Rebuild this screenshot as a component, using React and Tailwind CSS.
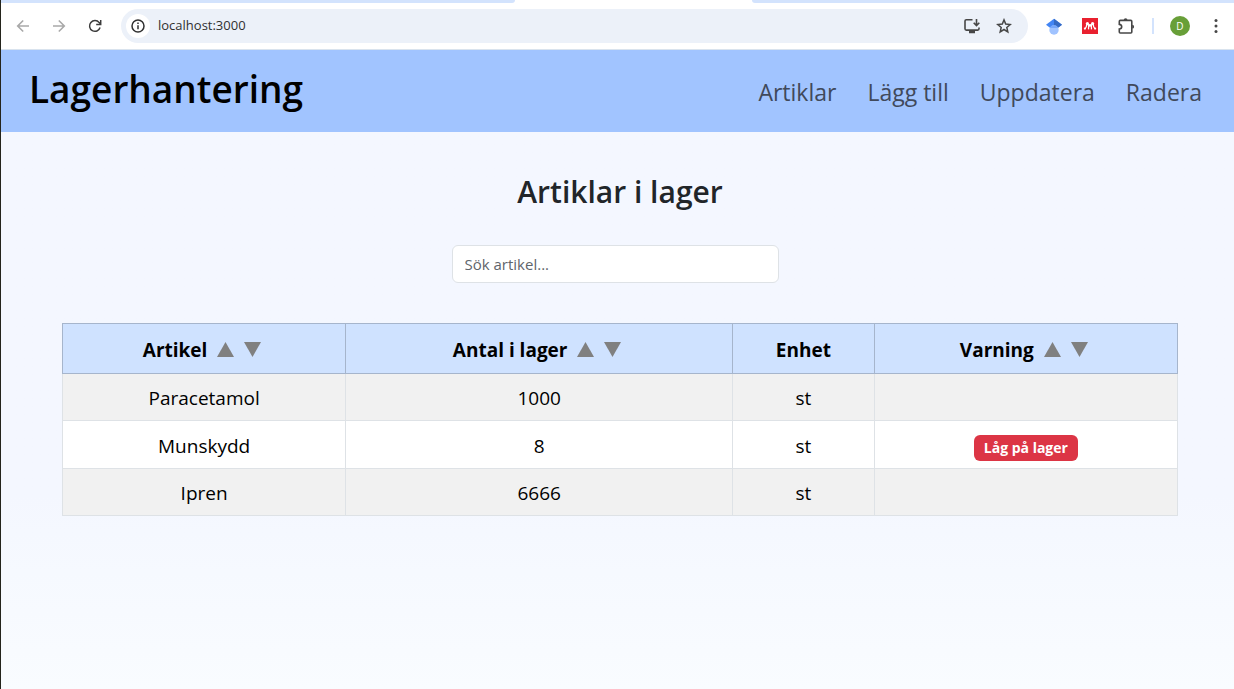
import React, { useState } from "react";

const links = ["Artiklar", "Lägg till", "Uppdatera", "Radera"];

const articles = [
  { name: "Paracetamol", amount: 1000, unit: "st" },
  { name: "Munskydd", amount: 8, unit: "st" },
  { name: "Ipren", amount: 6666, unit: "st" },
];

const LOW_STOCK = 10;

function ToolButton({ label, className = "", children }) {
  return (
    <button type="button" aria-label={label} className={`flex size-5 shrink-0 items-center justify-center ${className}`}>
      {children}
    </button>
  );
}

function BrowserBar() {
  return (
    <div className="border-b border-[#d9e3ee] bg-white">
      <div className="flex h-[3px] justify-between">
        <div className="h-full w-[514px] rounded-br-lg bg-[#d3e3fd]" />
        <div className="h-full w-[482px] rounded-bl-lg bg-[#d3e3fd]" />
      </div>
      <div className="flex h-[46px] items-center pr-2">
        <div className="flex w-[120px] shrink-0 items-center gap-4 pl-3">
          <ToolButton label="Tillbaka" className="text-[#a9a9a9]">
            <svg width="14" height="14" viewBox="0 0 14 14" fill="none" stroke="currentColor" strokeWidth="1.6">
              <path d="M13 7H2M7.2 1.5 1.7 7l5.5 5.5" />
            </svg>
          </ToolButton>
          <ToolButton label="Framåt" className="text-[#a9a9a9]">
            <svg width="14" height="14" viewBox="0 0 14 14" fill="none" stroke="currentColor" strokeWidth="1.6">
              <path d="M1 7h11M6.8 1.5 12.3 7l-5.5 5.5" />
            </svg>
          </ToolButton>
          <ToolButton label="Ladda om" className="text-[#3c3c3c]">
            <svg width="14" height="14" viewBox="0 0 14 14" fill="none" stroke="currentColor" strokeWidth="1.5">
              <path d="M12.1 8.6A5.4 5.4 0 1 1 11.2 3.6L12.5 5" />
              <path d="M12.7 1v4.5H8.2" />
            </svg>
          </ToolButton>
        </div>
        <div className="flex h-[34px] min-w-0 grow items-center rounded-full bg-[#ecf1f9] pl-[5px]">
          <button type="button" aria-label="Webbplatsinformation" className="flex size-6 shrink-0 items-center justify-center rounded-full bg-white">
            <svg width="14" height="14" viewBox="0 0 14 14" fill="none" stroke="#303030" strokeWidth="1.5">
              <circle cx="7" cy="7" r="6" />
              <path d="M7 6.2v4M7 3.6v1.5" />
            </svg>
          </button>
          <input
            aria-label="Adress"
            defaultValue="localhost:3000"
            className="ml-2 min-w-0 grow bg-transparent text-[13px] text-[#303030] outline-none"
          />
          <div className="mr-[14px] flex gap-3">
            <ToolButton label="Installera" className="text-[#474747]">
              <svg width="18" height="16" viewBox="0 0 18 16" fill="none" stroke="currentColor" strokeWidth="1.6">
                <path d="M9.5 1.7H3.3q-1.3 0-1.3 1.3v7.8q0 1.3 1.3 1.3h11.4q1.3 0 1.3-1.3V9.5" />
                <path d="M13.5 1v6M10.7 4.7l2.8 2.8 2.8-2.8" />
                <path d="M6 14h6" strokeWidth="2.5" />
              </svg>
            </ToolButton>
            <ToolButton label="Bokmärk" className="text-[#474747]">
              <svg width="16" height="16" viewBox="0 0 16 16" fill="none" stroke="currentColor" strokeWidth="1.5">
                <path d="m8 1.9 1.7 4.2 4.5.4-3.4 3 1 4.4L8 11.5l-3.8 2.4 1-4.4-3.4-3 4.5-.4z" />
              </svg>
            </ToolButton>
          </div>
        </div>
        <div className="ml-4 flex shrink-0 items-center gap-4">
          <ToolButton label="Scholar">
            <svg width="16" height="17" viewBox="0 0 16 17">
              <path d="M8 .8 0 6.8 3.6 9.6h8.800L16 6.800z" fill="#4285f4" />
              <path d="M8 .8v7l4.400 1.800L16 6.800z" fill="#356ac3" />
              <circle cx="8" cy="12" r="4.700" fill="#a0c3ff" />
              <path d="M3.700 10a4.700 4.700 0 0 1 8.600 0z" fill="#76a7fa" />
            </svg>
          </ToolButton>
          <ToolButton label="Mendeley">
            <svg width="16" height="16" viewBox="0 0 16 16">
              <path d="M0 0h16v16H0z" fill="#e9202f" />
              <g fill="#fff">
                <circle cx="5.4" cy="5.6" r="1.6" />
                <circle cx="10.6" cy="5.6" r="1.6" />
                <circle cx="8" cy="7.4" r="1.3" />
                <circle cx="2.9" cy="10.6" r="1.1" />
                <circle cx="13.1" cy="10.6" r="1.1" />
              </g>
              <path d="M3 10.6Q4.6 9.5 4.8 6M13 10.6Q11.400 9.500 11.200 6M6.200 6q.900 2 .300 5.300M9.800 6q-.900 2-.300 5.300" fill="none" stroke="#fff" strokeWidth="1.300" />
            </svg>
          </ToolButton>
          <ToolButton label="Tillägg" className="text-[#474747]">
            <svg width="18" height="18" viewBox="0 0 18 18" fill="none" stroke="currentColor" strokeWidth="1.6">
              <path d="M3.3 3.4h10.500q1 0 1 1v10.600q0 1-1 1H3.300q-1 0-1-1v-3q2.400-.3 2.400-2.300T2.300 7.400v-3q0-1 1-1z" />
              <path d="M6.700 3.200a1.900 1.900 0 0 1 3.800 0zM15.200 7.800a1.900 1.900 0 0 1 0 3.800z" fill="currentColor" stroke="none" />
            </svg>
          </ToolButton>
          <div className="h-4 w-0.5 bg-[#d3e3fd]" />
          <button type="button" aria-label="Profil" className="flex size-5 items-center justify-center rounded-full bg-[#689f38] text-[10px] text-white">
            D
          </button>
          <ToolButton label="Meny" className="text-[#474747]">
            <svg width="4" height="16" viewBox="0 0 4 16" fill="currentColor">
              <circle cx="2" cy="2.5" r="1.5" />
              <circle cx="2" cy="8" r="1.5" />
              <circle cx="2" cy="13.5" r="1.5" />
            </svg>
          </ToolButton>
        </div>
      </div>
    </div>
  );
}

function SortButtons({ field, onSort }) {
  return (
    <span className="mr-1 ml-2.5 inline-flex gap-2.5">
      <button type="button" aria-label={`Sortera ${field} stigande`} onClick={() => onSort(1)}>
        <svg width="17" height="15" viewBox="0 0 17 15" fill="#808080">
          <path d="M8.5 0 17 15H0z" />
        </svg>
      </button>
      <button type="button" aria-label={`Sortera ${field} fallande`} onClick={() => onSort(-1)}>
        <svg width="17" height="15" viewBox="0 0 17 15" fill="#808080">
          <path d="M0 0h17L8.5 15z" />
        </svg>
      </button>
    </span>
  );
}

const columns = [
  { title: "Artikel", width: "w-[25.4%]", key: (a) => a.name },
  { title: "Antal i lager", width: "w-[34.7%]", key: (a) => a.amount },
  { title: "Enhet", width: "w-[12.7%]" },
  { title: "Varning", width: "w-[27.2%]", key: (a) => (a.amount < LOW_STOCK ? 1 : 0) },
];

export default function App() {
  const [query, setQuery] = useState("");
  const [sort, setSort] = useState(null);

  const rows = articles.filter((a) => a.name.toLowerCase().includes(query.toLowerCase()));
  if (sort) {
    rows.sort((a, b) => (sort.key(a) > sort.key(b) ? 1 : -1) * sort.dir);
  }

  const cell = "border border-[#dee2e6] px-2 pt-0.5";

  return (
    <div className="flex min-h-screen flex-col border-l border-[#24241c] bg-white font-['Open_Sans','Noto_Sans',sans-serif]">
      <BrowserBar />
      <header className="flex h-[82px] items-center justify-between bg-[#a1c4ff] pr-8 pl-7">
        <h1 className="pb-1 text-[37px] leading-[48px] font-semibold text-black">Lagerhantering</h1>
        <nav className="flex gap-[31px] pt-0.5 text-[23px] text-[#40495b]">
          {links.map((l) => (
            <a key={l} href="#">{l}</a>
          ))}
        </nav>
      </header>
      <main className="flex grow flex-col items-center bg-linear-to-b from-[#f4f7ff] from-65% to-[#f9fcff] pt-10 pr-14 pl-[61px]">
        <h2 className="text-[30px] leading-[39px] font-semibold text-[#212529]">Artiklar i lager</h2>
        <input
          type="search"
          aria-label="Sök artikel"
          placeholder="Sök artikel..."
          value={query}
          onChange={(e) => setQuery(e.target.value)}
          className="mt-[34px] mr-2.5 h-[38px] w-[327px] rounded-md border border-[#dee2e6] bg-white px-3 text-[15px] text-[#212529] placeholder:text-[#5f656b]"
        />
        <table className="mt-10 w-full table-fixed border-collapse text-center text-[19px] leading-[30px] text-black">
          <thead>
            <tr className="h-[50px] bg-[#cfe2ff]">
              {columns.map((c) => (
                <th key={c.title} scope="col" className={`border border-[#a6b5cc] px-2 pt-0.5 font-bold ${c.width}`}>
                  {c.title}
                  {c.key && <SortButtons field={c.title} onSort={(dir) => setSort({ key: c.key, dir })} />}
                </th>
              ))}
            </tr>
          </thead>
          <tbody>
            {rows.map((a) => (
              <tr key={a.name} className={`odd:bg-[#f1f1f1] even:bg-white ${a.amount < LOW_STOCK ? "h-12" : "h-[47px]"}`}>
                <td className={cell}>{a.name}</td>
                <td className={cell}>{a.amount}</td>
                <td className={cell}>{a.unit}</td>
                <td className={cell}>
                  {a.amount < LOW_STOCK && (
                    <span className="inline-block rounded-md bg-[#dc3545] px-2.5 text-sm leading-[26px] font-bold text-white">
                      Låg på lager
                    </span>
                  )}
                </td>
              </tr>
            ))}
          </tbody>
        </table>
      </main>
    </div>
  );
}
